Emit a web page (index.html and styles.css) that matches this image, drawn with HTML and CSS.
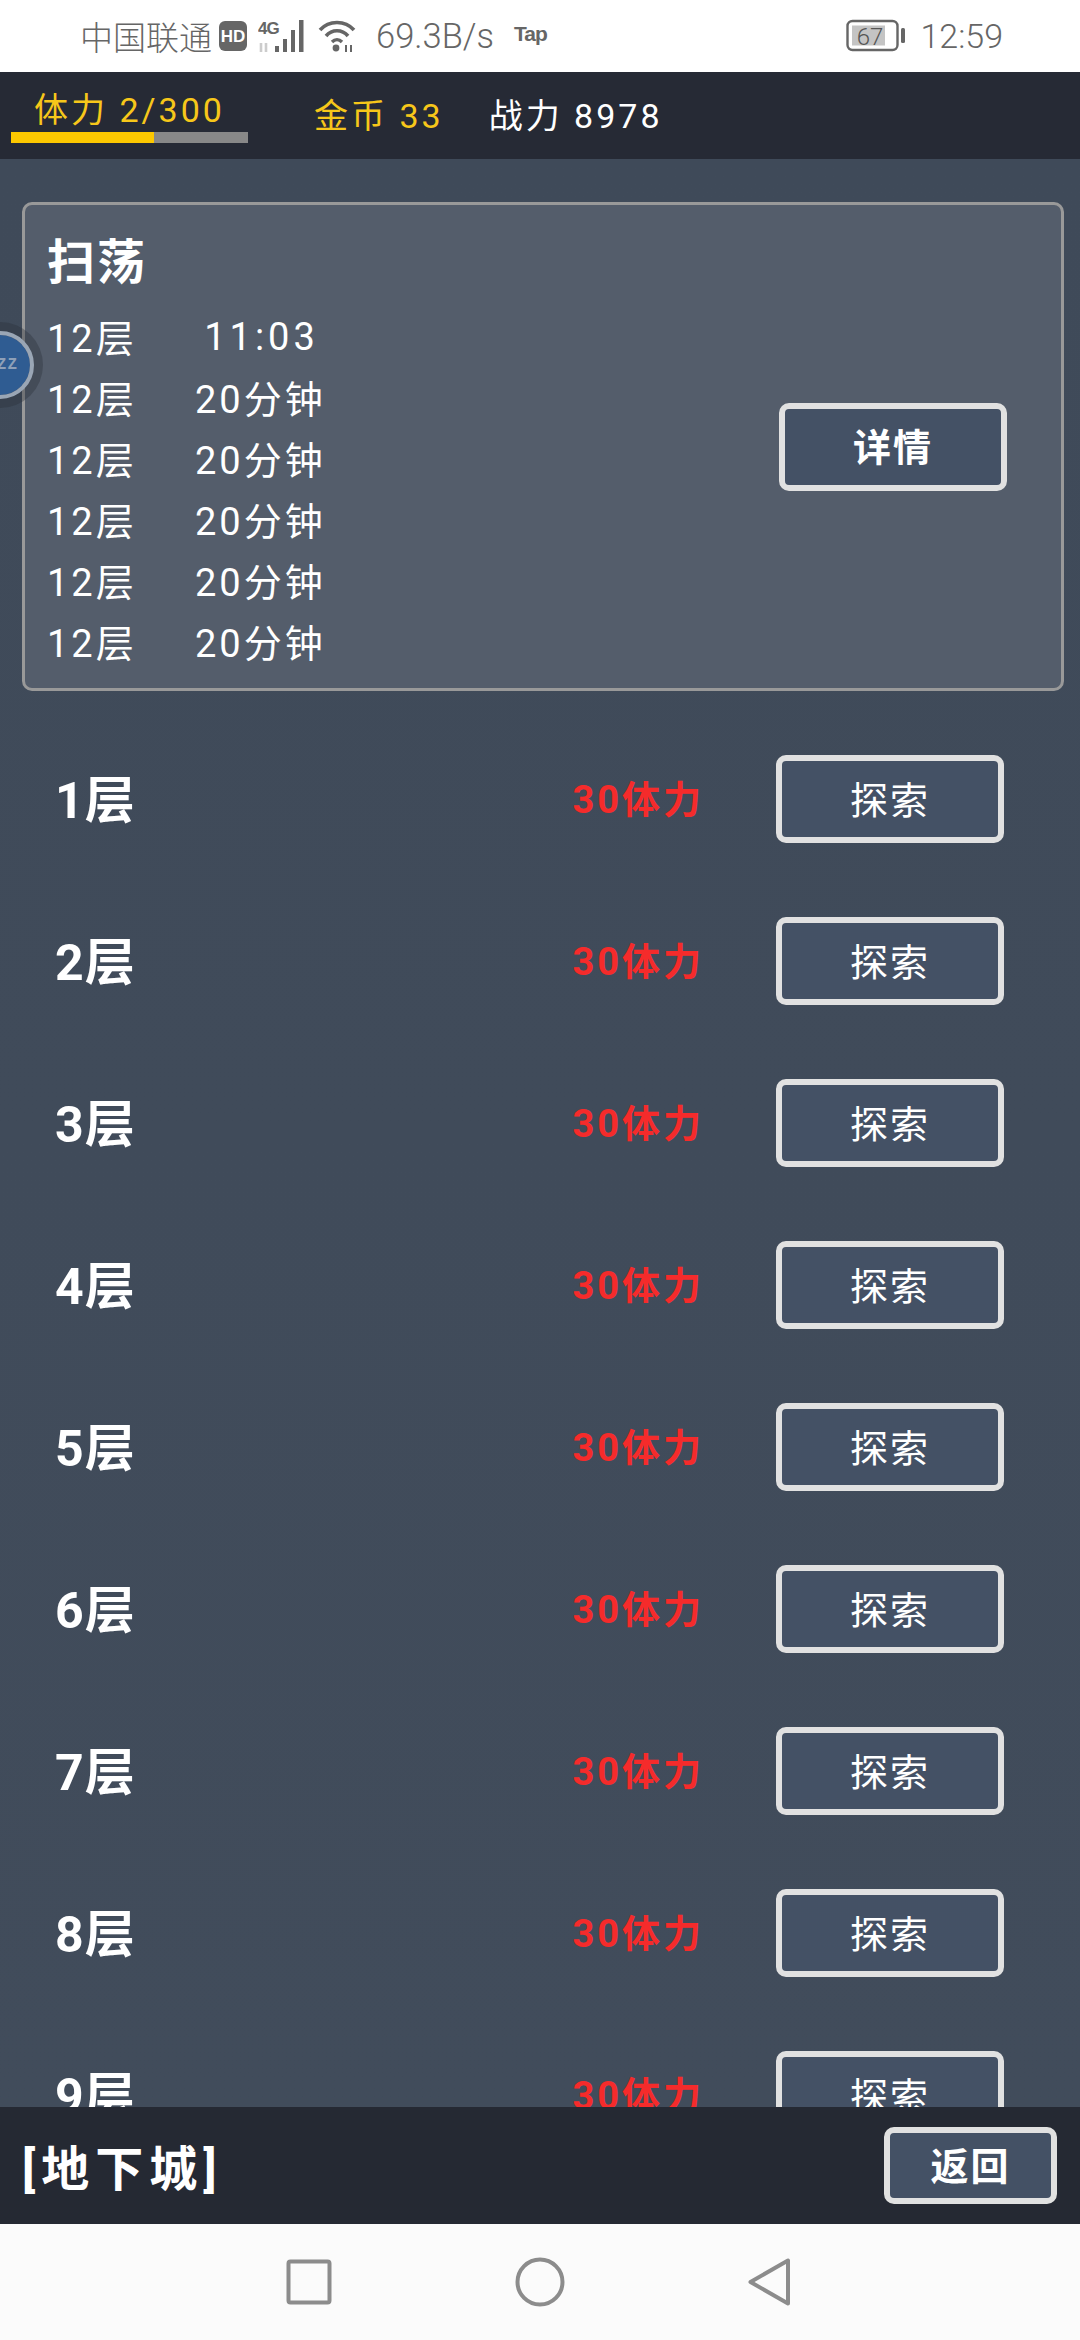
FILE: index.html
```html
<!DOCTYPE html>
<html lang="zh-CN">
<head>
<meta charset="utf-8">
<title>地下城</title>
<link rel="stylesheet" href="styles.css">
</head>
<body>
<div class="app">
  <div class="status">
    <span class="carrier">中国联通</span>
    <svg class="i-hd" width="30" height="32" viewBox="0 0 30 32"><rect x="1" y="1" width="28" height="30" rx="6" fill="#666"/><text x="15" y="22" class="hd-text">HD</text></svg>
    <svg class="i-sig" width="50" height="34" viewBox="0 0 50 34"><text x="0" y="15" class="g-text">4G</text><path d="M3 24v9M8 24v9" stroke="#ccc" stroke-width="2.6"/><rect x="17" y="27" width="4" height="6" fill="#666"/><rect x="25" y="20" width="4" height="13" fill="#666"/><rect x="33" y="11" width="4" height="22" fill="#666"/><rect x="41" y="1" width="4.500" height="32" fill="#666"/></svg>
    <svg class="i-wifi" width="38" height="34" viewBox="0 0 38 34"><path d="M2 11C11 1 27 1 36 11" fill="none" stroke="#666" stroke-width="3.6"/><path d="M8 17C14 10 24 10 30 17" fill="none" stroke="#666" stroke-width="3.6"/><path d="M14 23c3-3 7-3 10 0" fill="none" stroke="#666" stroke-width="3.4"/><circle cx="18" cy="29" r="3.400" fill="#666"/><path d="M28 26v7M33 26v7" stroke="#666" stroke-width="2"/></svg>
    <span class="speed">69.3B/s</span>
    <span class="tap">Tap</span>
    <span class="status-spacer"></span>
    <svg class="i-batt" width="60" height="34" viewBox="0 0 60 34"><rect x="1.500" y="2" width="50" height="29" rx="5" fill="none" stroke="#666" stroke-width="2.400"/><rect x="6" y="6.500" width="33" height="20" fill="#c4c4c4"/><rect x="55" y="9" width="4" height="15" rx="1.500" fill="#666"/><text x="24" y="26" class="batt-text">67</text></svg>
    <span class="clock">12:59</span>
  </div>

  <header class="topbar">
    <div class="stamina">
      <span class="stamina-label">体力 2/300</span>
      <div class="bar"><div class="bar-fill"></div></div>
    </div>
    <span class="stat gold">金币 33</span>
    <span class="stat power">战力 8978</span>
  </header>

  <main class="content">
    <section class="sweep">
      <div class="sweep-info">
        <h2 class="sweep-title">扫荡</h2>
        <div class="sweep-row"><span class="sweep-floor">12层</span><span class="sweep-time sweep-clock">11:03</span></div>
        <div class="sweep-row"><span class="sweep-floor">12层</span><span class="sweep-time">20分钟</span></div>
        <div class="sweep-row"><span class="sweep-floor">12层</span><span class="sweep-time">20分钟</span></div>
        <div class="sweep-row"><span class="sweep-floor">12层</span><span class="sweep-time">20分钟</span></div>
        <div class="sweep-row"><span class="sweep-floor">12层</span><span class="sweep-time">20分钟</span></div>
        <div class="sweep-row"><span class="sweep-floor">12层</span><span class="sweep-time">20分钟</span></div>
      </div>
      <button class="btn btn-strong sweep-btn">详情</button>
    </section>

    <div class="floors">
      <div class="floor"><span class="floor-name">1层</span><span class="floor-cost">30体力</span><button class="btn">探索</button></div>
      <div class="floor"><span class="floor-name">2层</span><span class="floor-cost">30体力</span><button class="btn">探索</button></div>
      <div class="floor"><span class="floor-name">3层</span><span class="floor-cost">30体力</span><button class="btn">探索</button></div>
      <div class="floor"><span class="floor-name">4层</span><span class="floor-cost">30体力</span><button class="btn">探索</button></div>
      <div class="floor"><span class="floor-name">5层</span><span class="floor-cost">30体力</span><button class="btn">探索</button></div>
      <div class="floor"><span class="floor-name">6层</span><span class="floor-cost">30体力</span><button class="btn">探索</button></div>
      <div class="floor"><span class="floor-name">7层</span><span class="floor-cost">30体力</span><button class="btn">探索</button></div>
      <div class="floor"><span class="floor-name">8层</span><span class="floor-cost">30体力</span><button class="btn">探索</button></div>
      <div class="floor"><span class="floor-name">9层</span><span class="floor-cost">30体力</span><button class="btn">探索</button></div>
    </div>
  </main>

  <footer class="footer">
    <span class="footer-title">[地下城]</span>
    <button class="btn btn-strong back-btn">返回</button>
  </footer>

  <nav class="navbar">
    <svg width="46" height="46" viewBox="0 0 46 46"><rect x="2.500" y="2.500" width="41" height="41" rx="2" fill="none" stroke="#8c8c8c" stroke-width="4"/></svg>
    <svg width="50" height="50" viewBox="0 0 50 50"><circle cx="25" cy="25" r="22.500" fill="none" stroke="#8c8c8c" stroke-width="4"/></svg>
    <svg width="42" height="50" viewBox="0 0 42 50"><path d="M40 3.500V46.500L2.500 25Z" fill="none" stroke="#8c8c8c" stroke-width="4" stroke-linejoin="round"/></svg>
  </nav>

  <div class="float-ball"><span class="float-text">ZZ</span></div>
</div>
</body>
</html>
```

FILE: styles.css
```css
* { box-sizing: border-box; }
html, body { margin: 0; padding: 0; }
body {
  width: 1080px;
  height: 2340px;
  overflow: hidden;
  font-family: Roboto, "Noto Sans CJK SC", sans-serif;
  color: #fff;
}
.app {
  position: relative;
  width: 1080px;
  height: 2340px;
  display: flex;
  flex-direction: column;
  background: #3f4a59;
  overflow: hidden;
}

/* status bar */
.status {
  height: 72px;
  flex: none;
  background: #fff;
  display: flex;
  align-items: center;
  padding-left: 80px;
  color: #666;
}
.carrier { font-size: 33px; font-family: "Noto Sans CJK SC", sans-serif; font-weight: 300; }
.i-hd { margin-left: 6px; }
.i-sig { margin-left: 10px; }
.i-wifi { margin-left: 10px; }
.hd-text { font: 700 17px "Liberation Sans", sans-serif; fill: #fff; text-anchor: middle; }
.g-text { font: 700 17px "Liberation Sans", sans-serif; fill: #666; letter-spacing: -1px; }
.batt-text { font: 300 24px Roboto, sans-serif; fill: #555; text-anchor: middle; }
.speed { margin-left: 20px; font-size: 34.500px; font-weight: 300; }
.tap { margin-left: 20px; margin-bottom: 4px; font-size: 21px; font-weight: 700; font-family: "Liberation Sans", sans-serif; letter-spacing: -1px; }
.status-spacer { flex: 1; }
.clock { margin: 0 77px 0 14px; font-size: 34px; font-weight: 300; }

/* top bar */
.topbar {
  height: 87px;
  flex: none;
  background: #262a35;
  display: flex;
  align-items: flex-start;
  padding-left: 11px;
}
.stamina { width: 237px; padding-top: 16px; }
.stamina-label {
  display: block;
  height: 44px;
  line-height: 44px;
  padding-left: 23px;
  font-size: 34px;
  letter-spacing: 3px;
  color: #f7c71a;
  white-space: nowrap;
}
.bar { height: 11px; background: #888; }
.bar-fill { width: 60.500%; height: 100%; background: #fdc800; }
.stat {
  margin-top: 22px;
  line-height: 44px;
  font-size: 34px;
  letter-spacing: 3px;
  white-space: nowrap;
}
.gold { margin-left: 66px; color: #f7c71a; }
.power { margin-left: 45px; color: #fff; }

/* main */
.content { flex: 1; min-height: 0; overflow: hidden; padding: 43px 16px 0 22px; background: linear-gradient(#3f4a59, #414c5b); }
.sweep {
  height: 489px;
  border: 3px solid #999;
  border-radius: 10px;
  background: #545d6b;
  display: flex;
  align-items: center;
  justify-content: space-between;
  padding: 0 54px 0 22px;
}
.sweep-info { align-self: flex-start; padding-top: 30px; }
.sweep-title { margin: 0 0 14px; font-size: 48px; line-height: 56px; font-weight: 700; letter-spacing: 2px; }
.sweep-row { display: flex; height: 61px; align-items: center; font-size: 38px; letter-spacing: 3px; }
.sweep-floor { width: 148px; }
.sweep-time { width: 130px; text-align: center; white-space: nowrap; }
.sweep-clock { padding: 2px 0 0 3px; letter-spacing: 4px; }

.btn {
  width: 228px;
  height: 88px;
  padding: 0 0 4px;
  border: 6px solid #e1e1e1;
  border-radius: 10px;
  background: #445165;
  color: #fff;
  font-family: inherit;
  font-size: 38px;
  letter-spacing: 2px;
}
.btn-strong { font-weight: 700; }

.floors { margin: 64px 0 0 -22px; width: 1080px; }
.floor { height: 162px; display: flex; align-items: flex-start; padding: 0 76px 0 55px; }
.floor-name { flex: 1; padding-top: 2px; line-height: 88px; font-size: 50px; font-weight: 700; letter-spacing: 1px; }
.floor-cost { margin-right: 72px; padding-top: 1px; line-height: 88px; font-size: 38px; font-weight: 700; letter-spacing: 3px; color: #f52b2b; }

/* footer */
.footer {
  height: 117px;
  flex: none;
  background: #252933;
  display: flex;
  align-items: center;
  justify-content: space-between;
  padding: 0 23px 0 22px;
}
.footer-title { padding-bottom: 2px; font-size: 48px; font-weight: 700; letter-spacing: 6px; }
.back-btn { width: 173px; height: 77px; }

/* nav bar */
.navbar {
  height: 116px;
  flex: none;
  background: #fbfbfb;
  display: flex;
  align-items: center;
  padding-left: 286px;
  gap: 183px;
}

/* floating ball */
.float-ball {
  position: absolute;
  left: -34px;
  top: 331px;
  width: 68px;
  height: 68px;
  border-radius: 50%;
  background: #2f5c92;
  border: 4px solid #9aa6b5;
  box-shadow: 0 0 0 9px rgba(40,45,55,.35);
  background-clip: padding-box;
  display: flex;
  align-items: center;
  justify-content: flex-end;
}
.float-text { font: 700 16px "Liberation Mono", monospace; letter-spacing: 1px; color: #8ea0b8; padding-right: 12px; }
```
